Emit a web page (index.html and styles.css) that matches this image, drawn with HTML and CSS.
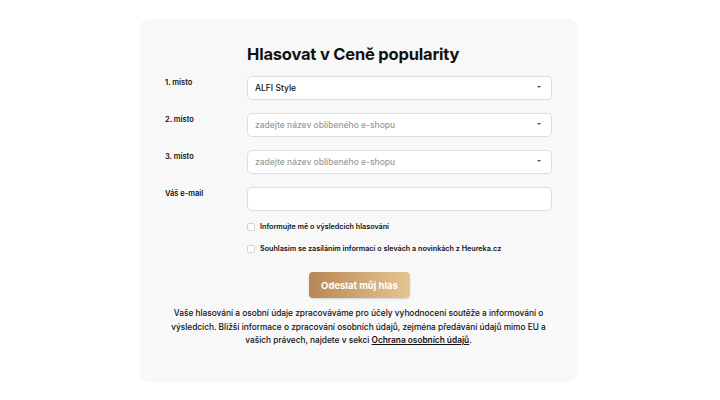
FILE: index.html
```html
<!DOCTYPE html>
<html lang="cs">
<head>
  <meta charset="UTF-8" />
  <meta name="viewport" content="width=device-width, initial-scale=1.0" />
  <title>Hlasovat v Ceně popularity</title>
  <link rel="stylesheet" href="styles.css">
</head>
<body>
  <div class="card">
    <form class="vote-form">
      <span></span>
      <h1>Hlasovat v Ceně popularity</h1>

      <label class="row-label" for="place1">1. místo</label>
      <div class="select">
        <input type="text" id="place1" value="ALFI Style">
        <span class="caret"></span>
      </div>

      <label class="row-label" for="place2">2. místo</label>
      <div class="select">
        <input type="text" id="place2" placeholder="zadejte název oblíbeného e-shopu">
        <span class="caret"></span>
      </div>

      <label class="row-label" for="place3">3. místo</label>
      <div class="select">
        <input type="text" id="place3" placeholder="zadejte název oblíbeného e-shopu">
        <span class="caret"></span>
      </div>

      <label class="row-label" for="email">Váš e-mail</label>
      <div class="select">
        <input type="email" id="email">
      </div>

      <span></span>
      <div class="checks">
        <label class="check"><input type="checkbox"> Informujte mě o výsledcích hlasování</label>
        <label class="check"><input type="checkbox"> Souhlasím se zasíláním informací o slevách a novinkách z Heureka.cz</label>
      </div>
    </form>

    <div class="submit">
      <button type="button">Odeslat můj hlas</button>
    </div>

    <p class="note">
      Vaše hlasování a osobní údaje zpracováváme pro účely vyhodnocení soutěže a informování o
      výsledcích. Bližší informace o zpracování osobních údajů, zejména předávání údajů mimo EU a
      vašich právech, najdete v sekci <a href="#">Ochrana osobních údajů</a>.
    </p>
  </div>
</body>
</html>
```

FILE: styles.css
```css
body {
  margin: 0;
  background: #fff;
  font-family: Inter, "Noto Sans", sans-serif;
  color: #111;
}

.card {
  width: 438px;
  height: 363px;
  box-sizing: border-box;
  margin: 19px 0 0 140px;
  padding: 27px 26px 0 25px;
  background: #f8f8f8;
  border-radius: 9px;
}

.vote-form {
  display: grid;
  grid-template-columns: 82px 305px;
  row-gap: 12px;
}

h1 {
  margin: 0 0 1px;
  font-size: 16.5px;
  line-height: 16px;
  font-weight: 700;
  letter-spacing: -0.2px;
  color: #111;
}

.row-label {
  padding-top: 2px;
  font-size: 7.5px;
  font-weight: 600;
  line-height: 12px;
}

.select {
  position: relative;
}

.select input {
  width: 100%;
  height: 24px;
  box-sizing: border-box;
  padding: 0 7px;
  border: 1px solid #dedede;
  border-radius: 5px;
  background: #fff;
  font-family: inherit;
  font-size: 8.5px;
  font-weight: 500;
  color: #111;
  outline: none;
}

.select input::placeholder {
  color: #9a9a9a;
}

.caret {
  position: absolute;
  right: 11px;
  top: 11px;
  border-left: 2px solid transparent;
  border-right: 2px solid transparent;
  border-top: 2.5px solid #555;
}

.checks {
  display: flex;
  flex-direction: column;
  gap: 10px;
  margin-top: -2px;
}

.check {
  display: flex;
  align-items: center;
  gap: 5px;
  font-size: 7.2px;
  font-weight: 600;
  line-height: 12px;
}

.check input {
  appearance: none;
  margin: 0;
  width: 8px;
  height: 8px;
  border: 1px solid #d4d4d4;
  border-radius: 2px;
  background: #fff;
}

.submit {
  display: flex;
  justify-content: center;
  padding: 17px 0 0 2px;
}

.submit button {
  width: 101px;
  height: 26px;
  border: none;
  border-radius: 4px;
  background: linear-gradient(to right, #b88753, #e5c592);
  color: #fff;
  font-family: inherit;
  font-size: 9.5px;
  font-weight: 700;
  box-shadow: 0 1px 2px rgba(0, 0, 0, 0.15);
}

.note {
  margin: 9px 0 0;
  text-align: center;
  font-size: 8.3px;
  font-weight: 500;
  line-height: 13.5px;
  color: #111;
}

.note a {
  color: #111;
  font-weight: 600;
  text-decoration: underline;
}
```
